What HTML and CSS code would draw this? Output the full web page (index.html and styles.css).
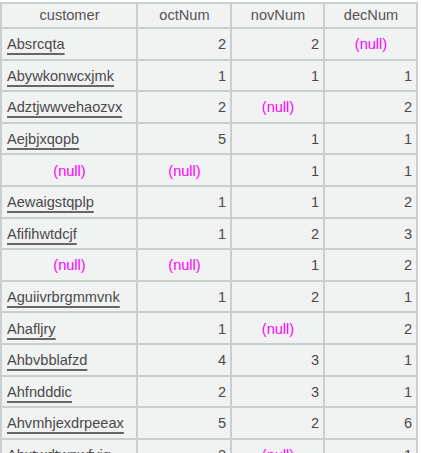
FILE: index.html
```
<!DOCTYPE html>
<html>
<head>
<meta charset="utf-8">
<link rel="stylesheet" href="styles.css">
</head>
<body>
<table class="grid">
  <colgroup>
    <col class="c1"><col class="c2"><col class="c3"><col class="c4">
  </colgroup>
  <thead>
    <tr><th>customer</th><th>octNum</th><th>novNum</th><th>decNum</th></tr>
  </thead>
  <tbody>
    <tr><td class="name"><span class="link">Absrcqta</span></td><td class="num">2</td><td class="num">2</td><td class="null">(null)</td></tr>
    <tr><td class="name"><span class="link">Abywkonwcxjmk</span></td><td class="num">1</td><td class="num">1</td><td class="num">1</td></tr>
    <tr><td class="name"><span class="link">Adztjwwvehaozvx</span></td><td class="num">2</td><td class="null">(null)</td><td class="num">2</td></tr>
    <tr><td class="name"><span class="link">Aejbjxqopb</span></td><td class="num">5</td><td class="num">1</td><td class="num">1</td></tr>
    <tr><td class="null">(null)</td><td class="null">(null)</td><td class="num">1</td><td class="num">1</td></tr>
    <tr><td class="name"><span class="link">Aewaigstqplp</span></td><td class="num">1</td><td class="num">1</td><td class="num">2</td></tr>
    <tr><td class="name"><span class="link">Afifihwtdcjf</span></td><td class="num">1</td><td class="num">2</td><td class="num">3</td></tr>
    <tr><td class="null">(null)</td><td class="null">(null)</td><td class="num">1</td><td class="num">2</td></tr>
    <tr><td class="name"><span class="link">Aguiivrbrgmmvnk</span></td><td class="num">1</td><td class="num">2</td><td class="num">1</td></tr>
    <tr><td class="name"><span class="link">Ahafljry</span></td><td class="num">1</td><td class="null">(null)</td><td class="num">2</td></tr>
    <tr><td class="name"><span class="link">Ahbvbblafzd</span></td><td class="num">4</td><td class="num">3</td><td class="num">1</td></tr>
    <tr><td class="name"><span class="link">Ahfndddic</span></td><td class="num">2</td><td class="num">3</td><td class="num">1</td></tr>
    <tr><td class="name"><span class="link">Ahvmhjexdrpeeax</span></td><td class="num">5</td><td class="num">2</td><td class="num">6</td></tr>
    <tr><td class="name"><span class="link">Ahxtwdtwpwfvig</span></td><td class="num">2</td><td class="null">(null)</td><td class="num">1</td></tr>
  </tbody>
</table>
</body>
</html>
```
FILE: styles.css
```
html, body {
  margin: 0;
  padding: 0;
  background: #ffffff;
  overflow: hidden;
  height: 453px;
}
body {
  padding-top: 2px;
  font-family: "Liberation Sans", Arial, sans-serif;
  font-size: 14.6px;
  line-height: 17px;
  color: #4a4a4a;
  box-sizing: border-box;
}
.grid {
  border-collapse: collapse;
  table-layout: fixed;
  width: 416px;
  background: #f1f2f2;
}
.c1 { width: 136px; }
.c2 { width: 94px; }
.c3 { width: 93px; }
.c4 { width: 93px; }
.grid th, .grid td {
  border: 2px solid #c9ced0;
  padding: 0 4px 0 5px;
  white-space: nowrap;
  overflow: hidden;
}
.grid th {
  height: 23px;
  font-weight: normal;
  text-align: center;
  color: #555555;
}
.grid td {
  height: 27.6px;
  padding-top: 2px;
}
.name { text-align: left; }
.link {
  text-decoration: underline;
  text-decoration-color: #666666;
  text-underline-offset: 4px;
  text-decoration-thickness: 2px;
}
.num { text-align: right; }
.null {
  text-align: center;
  color: #ff00ff;
}
```
